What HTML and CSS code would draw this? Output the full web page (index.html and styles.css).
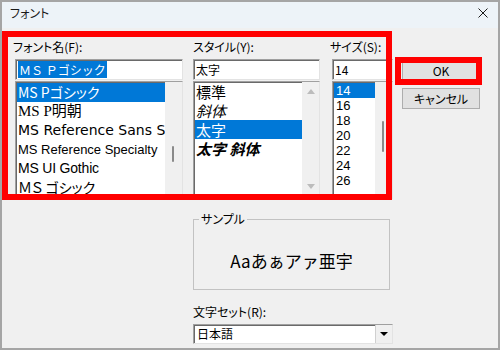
FILE: index.html
```html
<!DOCTYPE html>
<html lang="ja">
  <head>
    <meta charset="UTF-8" />
    <title>フォント</title>
    <link rel="stylesheet" href="styles.css">
  </head>
  <body>
    <div class="window">
      <div class="titlebar">
        <span class="title">フォント</span>
        <svg class="close" width="10" height="10" viewBox="0 0 10 10">
          <path d="M0.5 0.5 L9.5 9.5 M9.5 0.5 L0.5 9.5" stroke="#1a1a1a" stroke-width="1" fill="none" />
        </svg>
      </div>

      <div class="content">
        <div class="top-row">
          <!-- font name -->
          <div class="col col-font">
            <div class="label shift">フォント名(F):</div>
            <div class="edit"><span class="sel">ＭＳ Ｐゴシック</span></div>
            <div class="list">
              <ul class="items font-items">
                <li class="selected f-gothic">MS Pゴシック</li>
                <li class="f-mincho">MS P明朝</li>
                <li class="f-ref-sans">MS Reference Sans Serif</li>
                <li class="f-ref-spec">MS Reference Specialty</li>
                <li class="f-ui">MS UI Gothic</li>
                <li class="f-gothic">ＭＳ ゴシック</li>
              </ul>
              <div class="scroll">
                <span class="thumb thumb-font"></span>
              </div>
            </div>
          </div>

          <!-- style -->
          <div class="col col-style">
            <div class="label">スタイル(Y):</div>
            <div class="edit">太字</div>
            <div class="list">
              <ul class="items style-items">
                <li>標準</li>
                <li class="italic">斜体</li>
                <li class="selected">太字</li>
                <li class="bold italic">太字 斜体</li>
              </ul>
              <div class="scroll scroll-arrows">
                <span class="arrow up"></span>
                <span class="arrow down"></span>
              </div>
            </div>
          </div>

          <!-- size -->
          <div class="col col-size">
            <div class="label shift">サイズ(S):</div>
            <div class="edit">14</div>
            <div class="list">
              <ul class="items size-items">
                <li class="selected">14</li>
                <li>16</li>
                <li>18</li>
                <li>20</li>
                <li>22</li>
                <li>24</li>
                <li>26</li>
              </ul>
              <div class="scroll">
                <span class="thumb thumb-size"></span>
              </div>
            </div>
          </div>

          <div class="buttons">
            <button class="btn">OK</button>
            <button class="btn">キャンセル</button>
          </div>
        </div>

        <div class="lower">
          <fieldset class="sample">
            <legend>サンプル</legend>
            <div class="sample-text">Aaあぁアァ亜宇</div>
          </fieldset>
          <div class="label">文字セット(R):</div>
          <div class="combo">
            <span class="combo-value">日本語</span>
            <span class="drop"></span>
          </div>
        </div>
      </div>

      <!-- highlight marks -->
      <div class="mark mark-main"></div>
      <div class="mark mark-ok"></div>
    </div>
  </body>
</html>
```

FILE: styles.css
```css
html,
body {
  margin: 0;
  padding: 0;
  background: #fff;
}

body {
  font-family: "Noto Sans CJK JP", "Liberation Sans", sans-serif;
  font-size: 12px;
  color: #000;
}

.window {
  position: relative;
  width: 500px;
  height: 350px;
  box-sizing: border-box;
  border: 2px solid #a5a5a5;
  background: #f0f0f0;
}

.titlebar {
  height: 26px;
  box-sizing: border-box;
  padding: 2px 10px 0 8px;
  background: #edf3f8;
  display: flex;
  justify-content: space-between;
  align-items: flex-start;
}

.title {
  line-height: 18px;
  font-feature-settings: "palt";
  color: #1a1a1a;
}

.close {
  margin-top: 4px;
}

.content {
  padding: 12px 0 0 13px;
}

.top-row {
  display: flex;
  align-items: flex-start;
}

.col-font {
  width: 168px;
  margin-right: 10px;
}

.col-style {
  width: 127px;
  margin-right: 12px;
}

.col-size {
  width: 61px;
  margin-right: 9px;
}

.label {
  height: 14px;
  line-height: 14px;
  margin-bottom: 5px;
  white-space: nowrap;
  font-feature-settings: "palt";
}

.label.shift {
  margin-left: -2px;
}

.edit {
  height: 21px;
  box-sizing: border-box;
  padding: 0 0 0 2px;
  background: #fff;
  border: 1px solid #e3e3e3;
  border-top-color: #a0a0a0;
  border-left-color: #a0a0a0;
  box-shadow: inset 1px 1px 0 #6a6a6a;
  line-height: 19px;
  white-space: nowrap;
  overflow: hidden;
}

.edit .sel {
  background: #0078d7;
  color: #fff;
  padding: 0 1px;
}

.list {
  margin-top: 1px;
  height: 118px;
  box-sizing: border-box;
  display: flex;
  background: #fff;
  border: 1px solid #e3e3e3;
  border-top-color: #a0a0a0;
  border-left-color: #a0a0a0;
  box-shadow: inset 1px 1px 0 #6a6a6a;
  overflow: hidden;
}

.items {
  flex: 1;
  min-width: 0;
  list-style: none;
  margin: 0;
  padding: 1px 0 0 1px;
}

.items li {
  white-space: nowrap;
  overflow: hidden;
  padding-left: 1px;
}

.items li.selected {
  background: #0078d7;
  color: #fff;
}

.font-items li {
  height: 19px;
  line-height: 19px;
  font-size: 14px;
}

.f-gothic {
  font-family: "Noto Sans CJK JP", sans-serif;
  font-feature-settings: "palt";
}

.font-items .f-mincho {
  font-family: "Liberation Serif", "Noto Sans CJK JP", serif;
  font-size: 15px;
}

.font-items .f-ref-sans {
  font-family: "DejaVu Sans", sans-serif;
  font-size: 14px;
}

.font-items .f-ref-spec {
  font-family: "Liberation Sans", sans-serif;
  font-size: 13px;
}

.font-items .f-ui {
  font-family: "Liberation Sans", sans-serif;
  font-size: 14px;
  letter-spacing: -0.2px;
}

.style-items {
  padding-top: 0;
}

.style-items li {
  height: 19px;
  line-height: 19px;
  font-size: 15px;
}

.style-items .italic {
  font-style: italic;
}

.style-items .bold {
  font-weight: 700;
}

.size-items li {
  height: 15px;
  line-height: 15px;
  font-family: "Liberation Sans", sans-serif;
  font-size: 13px;
  padding-left: 2px;
}

.scroll {
  position: relative;
  width: 17px;
  flex: none;
  background: #f0f0f0;
}

.thumb {
  position: absolute;
  left: 7px;
  width: 2px;
  border-radius: 1px;
  background: #8a8a8a;
}

.thumb-font {
  top: 64px;
  height: 16px;
}

.thumb-size {
  top: 39px;
  height: 31px;
}

.arrow {
  position: absolute;
  left: 5px;
  width: 0;
  height: 0;
  border-left: 4px solid transparent;
  border-right: 4px solid transparent;
}

.arrow.up {
  top: 7px;
  border-bottom: 5px solid #bcbcbc;
}

.arrow.down {
  top: 102px;
  border-top: 5px solid #bcbcbc;
}

.buttons {
  width: 78px;
  padding-top: 20px;
  display: flex;
  flex-direction: column;
  gap: 7px;
}

.btn {
  height: 21px;
  width: 78px;
  padding: 0;
  background: #e1e1e1;
  border: 1px solid #adadad;
  font-family: inherit;
  font-size: 12px;
  color: #000;
  font-feature-settings: "palt";
}

.lower {
  margin: 13px 0 0 178px;
  width: 200px;
}

.sample {
  width: 197px;
  height: 78px;
  box-sizing: border-box;
  margin: 0;
  padding: 0;
  border: 1px solid #c2c2c2;
}

.sample legend {
  margin-left: 5px;
  padding: 0 2px;
  line-height: 14px;
  font-feature-settings: "palt";
}

.sample-text {
  height: 63px;
  box-sizing: border-box;
  padding-top: 5px;
  display: flex;
  align-items: center;
  justify-content: center;
  font-size: 17px;
}

.lower .label {
  margin-top: 15px;
}

.combo {
  height: 20px;
  box-sizing: border-box;
  display: flex;
  background: #fff;
  border: 1px solid #e3e3e3;
  border-top-color: #a0a0a0;
  border-left-color: #a0a0a0;
  box-shadow: inset 1px 1px 0 #6a6a6a;
}

.combo-value {
  flex: 1;
  padding-left: 3px;
  line-height: 18px;
}

.drop {
  position: relative;
  width: 16px;
  background: #f0f0f0;
  border-left: 1px solid #d0d0d0;
}

.drop::after {
  content: "";
  position: absolute;
  left: 4px;
  top: 7px;
  border-left: 4px solid transparent;
  border-right: 4px solid transparent;
  border-top: 4px solid #000;
}

/* red highlight marks */
.mark {
  position: absolute;
  box-sizing: border-box;
  border: 6px solid #ff0000;
}

.mark-main {
  left: 0;
  top: 29px;
  width: 390px;
  height: 169px;
}

.mark-ok {
  left: 393px;
  top: 55px;
  width: 87px;
  height: 28px;
}
```
